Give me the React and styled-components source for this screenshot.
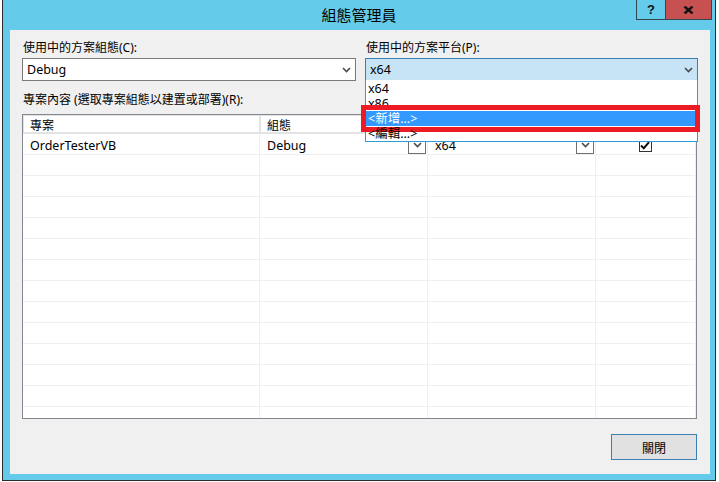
import React from "react";
import styled, { createGlobalStyle } from "styled-components";

const GlobalStyle = createGlobalStyle`
  html, body {
    margin: 0;
    padding: 0;
    background: #ffffff;
  }
  body {
    font-family: "Noto Sans", "Noto Sans CJK TC", sans-serif;
    font-size: 12px;
    color: #000;
  }
`;

const Screen = styled.div`
  width: 719px;
  height: 482px;
  overflow: hidden;
  background: #fff;
`;

const Window = styled.div`
  margin-left: 2px;
  width: 714px;
  height: 481px;
  box-sizing: border-box;
  border: 1px solid #2b2b2b;
  border-top: none;
  background: #65cbea;
  display: flex;
  flex-direction: column;
`;

const TitleBar = styled.div`
  height: 30px;
  display: grid;
  grid-template-columns: 1fr auto 1fr;
  align-items: center;
`;

const Title = styled.div`
  grid-column: 2;
  font-family: "Noto Sans CJK TC", sans-serif;
  font-size: 15px;
  line-height: 30px;
`;

const CaptionButtons = styled.div`
  grid-column: 3;
  justify-self: end;
  align-self: start;
  margin-right: 3px;
  display: flex;
  border: 1px solid #35464f;
  border-top: none;
`;

const CaptionButton = styled.div`
  width: ${(p) => (p.$close ? "45px" : "28px")};
  height: 19px;
  background: ${(p) => (p.$close ? "#c75050" : "transparent")};
  border-left: ${(p) => (p.$close ? "1px solid #35464f" : "none")};
  display: flex;
  align-items: center;
  justify-content: center;
  font-family: "Liberation Sans", sans-serif;
  font-weight: bold;
  font-size: 13px;
  color: #111;
`;

const Client = styled.div`
  flex: 1;
  margin: 0 5px 6px 7px;
  background: #f0f0f0;
  padding: 10px 12px 14px 12px;
  display: flex;
  flex-direction: column;
`;

const TopRow = styled.div`
  display: grid;
  grid-template-columns: 334px 333px;
  gap: 9px;
`;

const Field = styled.div`
  display: flex;
  flex-direction: column;
`;

const Label = styled.div`
  height: 16px;
  line-height: 16px;
  padding-left: 1px;
  margin-top: ${(p) => p.$mt || 0}px;
`;

const Combo = styled.div`
  position: relative;
  margin-top: 2px;
  height: 23px;
  box-sizing: border-box;
  border: 1px solid ${(p) => (p.$active ? "#3c7fb1" : "#7a7a7a")};
  background: ${(p) => (p.$active ? "#c6e4f5" : "#ffffff")};
  display: flex;
  align-items: center;
  justify-content: space-between;
  padding: 0 4px 0 4px;
  font-size: 12.5px;
`;

const DropList = styled.div`
  position: absolute;
  z-index: 5;
  top: 100%;
  left: -1px;
  right: -1px;
  background: #fff;
  border: 1px solid #2a9fd6;
  border-top: none;
  padding-top: 1px;
`;

const DropItem = styled.div`
  position: relative;
  height: 15px;
  line-height: 15px;
  padding-left: 2px;
  font-size: 12.5px;
  background: ${(p) => (p.$selected ? "#3399ff" : "transparent")};
  color: ${(p) => (p.$selected ? "#ffffff" : "#000")};
`;

const Callout = styled.span`
  position: absolute;
  left: -5px;
  top: -6px;
  width: 339px;
  height: 27px;
  box-sizing: border-box;
  border: 5px solid #ed1c24;
  pointer-events: none;
`;

const GridBox = styled.div`
  margin-top: 6px;
  margin-right: 1px;
  height: 305px;
  box-sizing: border-box;
  border: 1px solid #828790;
  background: #fff;
  overflow: hidden;
`;

const Columns = "237px 168px 168px 100px";

const HeaderRow = styled.div`
  display: grid;
  grid-template-columns: ${Columns};
  border-top: 1px solid #e3e3e3;
  border-left: 1px solid #e3e3e3;
`;

const HeaderCell = styled.div`
  height: 18px;
  box-sizing: border-box;
  border-right: 2px solid #e3e3e3;
  border-bottom: 2px solid #e3e3e3;
  padding: 2px 0 0 6px;
  line-height: 15px;
`;

const Row = styled.div`
  display: grid;
  grid-template-columns: ${Columns};
  height: 21px;
`;

const Cell = styled.div`
  box-sizing: border-box;
  border-right: 1px solid #efefef;
  border-bottom: 1px solid #efefef;
  padding: 2px 1px 0 ${(p) => (p.$center ? "0" : "7px")};
  display: flex;
  align-items: center;
  justify-content: ${(p) => (p.$center ? "center" : "space-between")};
  font-size: 12.5px;
`;

const CellButton = styled.div`
  width: 18px;
  height: 17px;
  box-sizing: border-box;
  border: 1px solid #707070;
  background: #fff;
  display: flex;
  align-items: center;
  justify-content: center;
`;

const CheckBox = styled.div`
  width: 13px;
  height: 13px;
  box-sizing: border-box;
  border: 1px solid #333;
  background: #fff;
  display: flex;
  align-items: center;
  justify-content: center;
  margin-top: 1px;
`;

const Footer = styled.div`
  display: flex;
  justify-content: flex-end;
  margin-top: 15px;
  margin-right: 1px;
`;

const CloseButton = styled.button`
  width: 86px;
  height: 26px;
  box-sizing: border-box;
  border: 1px solid #3c7fb1;
  background: #e1e1e1;
  font-family: "Noto Sans CJK TC", sans-serif;
  font-size: 12px;
  color: #000;
  padding: 0;
`;

const Chevron = () => (
  <svg width="9" height="6" viewBox="0 0 9 6">
    <path d="M1 1 L4.5 4.5 L8 1" fill="none" stroke="#4a4a4a" strokeWidth="1.6" />
  </svg>
);

const CloseGlyph = () => (
  <svg width="11" height="8" viewBox="0 0 11 8">
    <path d="M1.5 0.5 L9.5 7.5 M9.5 0.5 L1.5 7.5" stroke="#111" strokeWidth="2.4" />
  </svg>
);

const Check = () => (
  <svg width="10" height="9" viewBox="0 0 10 9">
    <path d="M1 4.5 L3.8 7.2 L9 1.2" fill="none" stroke="#111" strokeWidth="2" />
  </svg>
);

const platforms = ["x64", "x86", "<新增...>", "<編輯...>"];

export default function App() {
  const emptyRows = Array.from({ length: 13 });
  return (
    <Screen>
      <GlobalStyle />
      <Window>
        <TitleBar>
          <Title>組態管理員</Title>
          <CaptionButtons>
            <CaptionButton>?</CaptionButton>
            <CaptionButton $close>
              <CloseGlyph />
            </CaptionButton>
          </CaptionButtons>
        </TitleBar>
        <Client>
          <TopRow>
            <Field>
              <Label>使用中的方案組態(C):</Label>
              <Combo>
                <span>Debug</span>
                <Chevron />
              </Combo>
            </Field>
            <Field>
              <Label>使用中的方案平台(P):</Label>
              <Combo $active>
                <span>x64</span>
                <Chevron />
                <DropList>
                  {platforms.map((p, i) => (
                    <DropItem key={p} $selected={i === 2}>
                      {p}
                      {i === 2 && <Callout />}
                    </DropItem>
                  ))}
                </DropList>
              </Combo>
            </Field>
          </TopRow>
          <Label $mt={11}>專案內容 (選取專案組態以建置或部署)(R):</Label>
          <GridBox>
            <HeaderRow>
              <HeaderCell>專案</HeaderCell>
              <HeaderCell>組態</HeaderCell>
              <HeaderCell>平台</HeaderCell>
              <HeaderCell>建置</HeaderCell>
            </HeaderRow>
            <Row>
              <Cell>OrderTesterVB</Cell>
              <Cell>
                <span>Debug</span>
                <CellButton>
                  <Chevron />
                </CellButton>
              </Cell>
              <Cell>
                <span>x64</span>
                <CellButton>
                  <Chevron />
                </CellButton>
              </Cell>
              <Cell $center>
                <CheckBox>
                  <Check />
                </CheckBox>
              </Cell>
            </Row>
            {emptyRows.map((_, i) => (
              <Row key={i}>
                <Cell />
                <Cell />
                <Cell />
                <Cell />
              </Row>
            ))}
          </GridBox>
          <Footer>
            <CloseButton>關閉</CloseButton>
          </Footer>
        </Client>
      </Window>
    </Screen>
  );
}
